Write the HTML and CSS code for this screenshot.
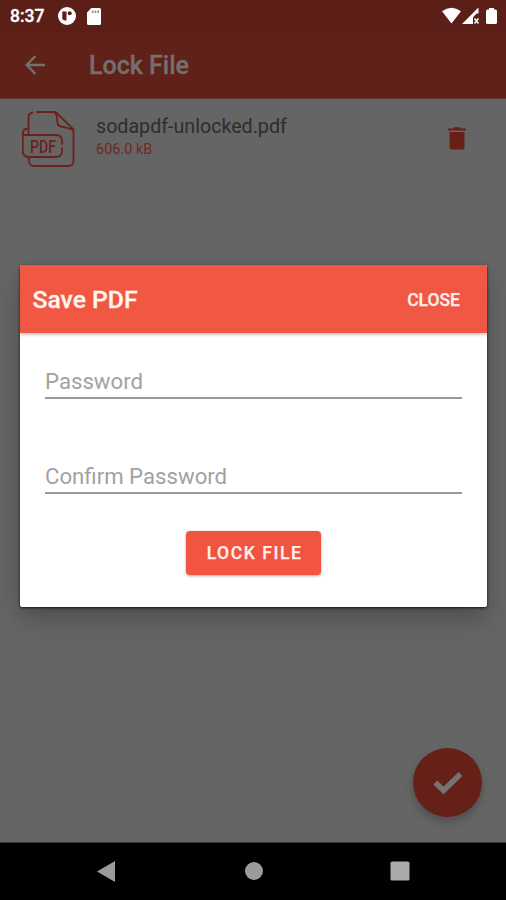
FILE: index.html
```html
<!DOCTYPE html>
<html lang="en">
<head>
<meta charset="utf-8">
<title>Lock File</title>
<link rel="stylesheet" href="styles.css">
</head>
<body>
<div class="screen">
  <header class="top">
    <div class="status">
      <span class="time">8:37</span>
      <svg class="st-app" width="18" height="18" viewBox="0 0 18 18"><circle cx="9" cy="9" r="9" fill="#fff"/><path d="M4.300 4.500H8.500V13.500a5 5 0 0 1-4.200-1.500z" fill="#5c1f18"/><circle cx="11.700" cy="6.300" r="2" fill="#5c1f18"/></svg>
      <svg class="st-card" width="14" height="17" viewBox="0 0 14 17"><path d="M4.300 0H12.500a1.500 1.500 0 0 1 1.500 1.500V15.500a1.500 1.500 0 0 1-1.500 1.500H1.500A1.500 1.500 0 0 1 0 15.500V4.500z" fill="#fff"/><path d="M5 2.500h1.600v2.500H5zM7.700 2.500h1.600v2.500H7.700zM10.400 2.500H12v2.500h-1.600z" fill="#a98782"/></svg>
      <svg class="st-right" width="57" height="18" viewBox="0 0 57 18"><path d="M0 4.300Q9.500-3 19 4.300L9.500 16.500z" fill="#fff"/><path d="M20 17L36.500.5V6.500h-2L31 10.500V17z" fill="#fff"/><path d="M32.500 11.500l4 5m0-5l-4 5" stroke="#fff" stroke-width="1.500"/><path d="M47 1h5v1.500h1.500a1.500 1.500 0 0 1 1.500 1.500V15.500a1.500 1.500 0 0 1-1.500 1.500h-8a1.500 1.500 0 0 1-1.500-1.500V4a1.500 1.500 0 0 1 1.500-1.500H47z" fill="#fff"/></svg>
    </div>
    <div class="appbar">
      <svg class="back" width="20" height="20" viewBox="0 0 20 20" fill="none" stroke="#747070" stroke-width="2.400"><path d="M20 10H2M10.500 1L1.700 10L10.500 19"/></svg>
      <h1>Lock File</h1>
    </div>
  </header>
  <main class="content">
    <div class="file">
      <svg class="pdf" width="54" height="58" viewBox="0 0 54 58" fill="none" stroke="#6c211d" stroke-width="1.800" stroke-linecap="round" stroke-linejoin="round">
        <path d="M6.500 22V6a5 5 0 0 1 4-4.500M15 1H33.500L51.500 18.500V50a5 5 0 0 1-5 5H12a5 5 0 0 1-5-5V46.500M32.500 1c4 4.500 2 10 3.500 13 3 3 11 1.500 15.500 5.500M6.500 17.500C2.500 17.500.8 19 .8 23V39.500c0 4.500 2 6.500 6.200 6.500H34c4 0 6-2 6-6V37.500M40 33V30c0-4-2-6-6-6H4.500C2 24 1 23.500 1 21.500"/>
        <text x="8" y="41.500" textLength="26" lengthAdjust="spacingAndGlyphs">PDF</text>
      </svg>
      <div class="info"><div class="name">sodapdf-unlocked.pdf</div><div class="size">606.0 kB</div></div>
      <svg class="trash" width="18" height="23" viewBox="0 0 18 23"><path d="M0 1.500H5L6 .3h6l1 1.200h5V3.500H0zM1.500 5h15V20.500a2 2 0 0 1-2 2h-11a2 2 0 0 1-2-2z" fill="#681f16"/></svg>
    </div>
    <div class="fab"><svg width="32" height="26" viewBox="0 0 32 26"><path d="M3.300 12.500L11.500 20.500L28.500 4" fill="none" stroke="#777372" stroke-width="5.500" stroke-linejoin="miter"/></svg></div>
  </main>
  <nav class="nav">
    <svg width="18" height="21" viewBox="0 0 18 21"><path d="M0 10.500L18 0V21z" fill="#9b9b9b"/></svg>
    <svg width="18" height="18" viewBox="0 0 18 18"><circle cx="9" cy="9" r="9" fill="#9b9b9b"/></svg>
    <svg width="20" height="20" viewBox="0 0 20 20"><rect x=".5" y=".5" width="19" height="19" rx="1.500" fill="#aaa"/></svg>
  </nav>
  <section class="dialog">
    <div class="dialog-head"><h2>Save PDF</h2><button class="close">CLOSE</button></div>
    <form class="form">
      <input type="text" placeholder="Password">
      <input type="text" placeholder="Confirm Password">
      <button class="lock" type="button">LOCK FILE</button>
    </form>
  </section>
</div>
</body>
</html>
```
FILE: styles.css
```css
* { box-sizing: border-box; }
body { margin: 0; font-family: Roboto, "Liberation Sans", sans-serif; }
h1, h2 { margin: 0; font-weight: 500; }
button { border: 0; padding: 0; font-family: inherit; font-weight: 500; color: #fff0ed; }
svg { display: block; flex: none; }
.screen { position: relative; width: 506px; height: 900px; display: flex; flex-direction: column; overflow: hidden; background: #656565; }
.top { height: 99px; background: #602119; border-bottom: 1px solid #5d3932; }
.status { height: 32px; background: #5c1f18; display: flex; align-items: center; padding: 0 7px 0 10px; color: #fff; }
.time { width: 48px; font-size: 17.500px; font-weight: 500; -webkit-text-stroke: .3px #fff; }
.st-card { margin-left: 11px; }
.st-right { margin-left: auto; }
.appbar { height: 66px; display: flex; align-items: center; padding-left: 25px; }
.appbar h1 { margin-left: 44px; font-size: 25px; color: #747070; -webkit-text-stroke: .3px #747070; }
.content { flex: 1; position: relative; }
.file { display: flex; padding: 12px 40px 0 22px; }
.pdf text { font: 500 18px Roboto, sans-serif; fill: #6c211d; stroke: none; }
.info { margin-left: 20px; padding-top: 4px; }
.name { font-size: 19.700px; line-height: 24px; color: #2d2d2d; letter-spacing: -.02px; }
.size { font-size: 14.500px; line-height: 20px; margin-top: 1px; color: #702923; }
.trash { margin: 16px 0 0 auto; }
.fab { position: absolute; right: 24px; bottom: 25px; width: 69px; height: 69px; border-radius: 50%; background: #672018; display: flex; align-items: center; justify-content: center; box-shadow: 0 5px 8px rgba(0,0,0,.22); }
.nav { height: 58px; background: #000; display: grid; grid-template-columns: 212px 83px 209px; justify-items: center; align-items: center; border-top: 1px solid #333; padding-bottom: 1px; }
.dialog { position: absolute; left: 20px; top: 265px; width: 467px; height: 342px; background: #fff; border-radius: 2px; overflow: hidden; box-shadow: 0 1px 3px rgba(0,0,0,.75), 0 12px 24px rgba(0,0,0,.22); }
.dialog-head { position: relative; height: 68px; background: #f15843; display: flex; align-items: center; justify-content: space-between; padding: 2px 27px 0 12.500px; box-shadow: 0 1px 4px rgba(0,0,0,.32); }
.dialog-head h2 { margin-top: -2px; font-size: 24.700px; color: #fff5f2; -webkit-text-stroke: .3px #fff5f2; }
.close { background: none; font-size: 17.500px; -webkit-text-stroke: .25px #fff0ed; }
.form { display: flex; flex-direction: column; padding: 31px 25px 0; }
.form input { width: 100%; height: 35px; margin: 0 0 60px; padding: 0; border: 0; border-bottom: 2px solid #999; border-radius: 0; background: none; font: 400 22.200px Roboto, sans-serif; outline: none; }
.form input::placeholder { color: #a2a2a2; opacity: 1; }
.lock { align-self: center; width: 135px; height: 44px; margin-top: -23px; background: #f15440; border-radius: 4px; font-size: 17.500px; letter-spacing: 1.550px; padding: 0 0 0 2px; box-shadow: 0 1px 3px rgba(0,0,0,.35); -webkit-text-stroke: .25px #fff0ed; }
```
